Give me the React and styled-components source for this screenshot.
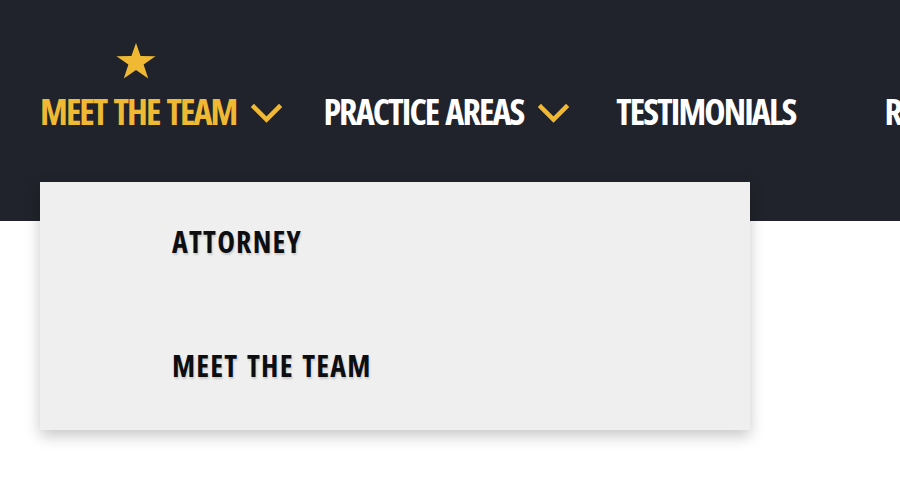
import React from "react";
import styled, { createGlobalStyle } from "styled-components";

const GlobalStyle = createGlobalStyle`
  html, body { margin: 0; padding: 0; background: #ffffff; }
  body { font-family: "Open Sans", "DejaVu Sans Condensed", sans-serif; }
`;

const gold = "#f0b934";

function Chevron() {
  return (
    <ChevronSvg viewBox="0 0 31 21">
      <path d="M3 4 L15.5 16.5 L28 4" fill="none" stroke={gold} strokeWidth="4.5" strokeLinecap="square" />
    </ChevronSvg>
  );
}

function Star() {
  return (
    <StarSvg viewBox="0 0 40 36">
      <path
        fill={gold}
        d="M20 0 L24.6 13 L39.5 13.2 L27.6 21.6 L32.2 35.4 L20 27 L7.8 35.4 L12.4 21.6 L0.5 13.2 L15.4 13 Z"
      />
    </StarSvg>
  );
}

function App() {
  const items = [
    { label: "MEET THE TEAM", active: true, caret: true, space: 41 },
    { label: "PRACTICE AREAS", caret: true, space: 47 },
    { label: "TESTIMONIALS", space: 89 },
    { label: "RESULTS", space: 44 },
  ];
  return (
    <>
      <GlobalStyle />
      <Page>
        <Nav>
          {items.map((it) => (
            <NavItem key={it.label} active={it.active} space={it.space}>
              {it.active && <Star />}
              <Label>{it.label}</Label>
              {it.caret && <Chevron />}
            </NavItem>
          ))}
        </Nav>
        <Dropdown>
          <DropItem>ATTORNEY</DropItem>
          <DropItem>MEET THE TEAM</DropItem>
        </Dropdown>
      </Page>
    </>
  );
}

export default App;

const Page = styled.div`
  position: relative;
  width: 900px;
  height: 498px;
  overflow: hidden;
  background: #ffffff;
`;

const Nav = styled.nav`
  display: flex;
  align-items: center;
  height: 221px;
  box-sizing: border-box;
  padding: 3px 0 0 40px;
  background: #20232b;
  white-space: nowrap;
  overflow: hidden;
`;

const NavItem = styled.div`
  position: relative;
  display: flex;
  align-items: center;
  flex-shrink: 0;
  margin-right: ${({ space }) => space}px;
  color: ${({ active }) => (active ? gold : "#ffffff")};
`;

const Label = styled.span`
  font-size: 36px;
  font-weight: 700;
  font-stretch: 75%;
  letter-spacing: -1.9px;
  word-spacing: 2.5px;
  line-height: 1;
`;

const ChevronSvg = styled.svg`
  width: 31px;
  height: 21px;
  margin-left: 15px;
  margin-top: 2px;
`;

const StarSvg = styled.svg`
  position: absolute;
  left: 76px;
  top: -51px;
  width: 40px;
  height: 36px;
`;

const Dropdown = styled.div`
  position: absolute;
  left: 40px;
  top: 182px;
  width: 710px;
  height: 248px;
  box-sizing: border-box;
  padding: 45px 0 0 132px;
  display: flex;
  flex-direction: column;
  gap: 94px;
  background: #efefef;
  box-shadow: 0 6px 14px rgba(0, 0, 0, 0.22);
`;

const DropItem = styled.div`
  font-size: 30px;
  font-weight: 700;
  font-stretch: 75%;
  line-height: 1;
  letter-spacing: 1.2px;
  word-spacing: 2px;
  color: #0d0e12;
  text-shadow: 1px 2px 2px rgba(0, 0, 0, 0.15);
`;
